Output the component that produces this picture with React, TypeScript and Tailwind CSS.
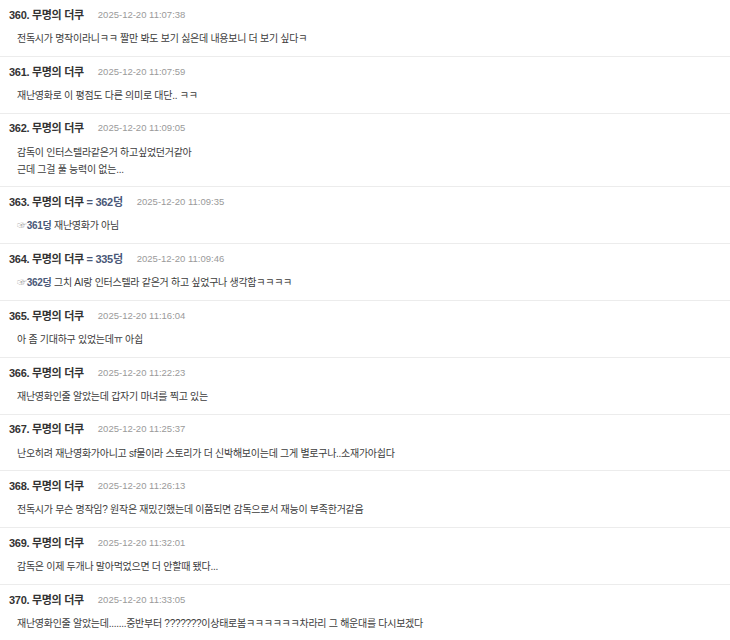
type Reply = { no: number; time: string; ref?: number; lines: React.ReactNode[] };

const Hand = ({ n }: { n: number }) => (
  <>
    <span className="text-[#aaa] text-[10px]">☞</span>
    <span className="font-bold text-[#4a5878]">{n}덩</span>
  </>
);

const replies: Reply[] = [
  { no: 360, time: '2025-12-20 11:07:38', lines: ['전독시가 명작이라니ㅋㅋ 짤만 봐도 보기 싫은데 내용보니 더 보기 싶다ㅋ'] },
  { no: 361, time: '2025-12-20 11:07:59', lines: ['재난영화로 이 평점도 다른 의미로 대단.. ㅋㅋ'] },
  { no: 362, time: '2025-12-20 11:09:05', lines: ['감독이 인터스텔라같은거 하고싶었던거같아', '근데 그걸 풀 능력이 없는...'] },
  { no: 363, time: '2025-12-20 11:09:35', ref: 362, lines: [<><Hand n={361} /> 재난영화가 아님</>] },
  { no: 364, time: '2025-12-20 11:09:46', ref: 335, lines: [<><Hand n={362} /> 그치 AI랑 인터스텔라 같은거 하고 싶었구나 생각함ㅋㅋㅋㅋ</>] },
  { no: 365, time: '2025-12-20 11:16:04', lines: ['아 좀 기대하구 있었는데ㅠ 아쉽'] },
  { no: 366, time: '2025-12-20 11:22:23', lines: ['재난영화인줄 알았는데 갑자기 마녀를 찍고 있는'] },
  { no: 367, time: '2025-12-20 11:25:37', lines: ['난오히려 재난영화가아니고 sf물이라 스토리가 더 신박해보이는데 그게 별로구나..소재가아쉽다'] },
  { no: 368, time: '2025-12-20 11:26:13', lines: ['전독시가 무슨 명작임? 원작은 재밌긴했는데 이쯤되면 감독으로서 재능이 부족한거같음'] },
  { no: 369, time: '2025-12-20 11:32:01', lines: ['감독은 이제 두개나 말아먹었으면 더 안할때 됐다...'] },
  { no: 370, time: '2025-12-20 11:33:05', lines: ['재난영화인줄 알았는데.......중반부터 ???????이상태로봄ㅋㅋㅋㅋㅋㅋ차라리 그 해운대를 다시보겠다'] },
];

export default function App() {
  return (
    <div
      className="w-[730px] h-[640px] overflow-hidden bg-white"
      style={{ fontFamily: '"Liberation Sans", "Noto Sans CJK KR", sans-serif' }}
    >
      {replies.map((r) => (
        <div key={r.no} className="border-b border-[#ececec] pl-[9px] pt-[6px] pb-[8.8px]">
          <div className="flex items-center h-[18px] whitespace-nowrap">
            <span className="text-[11px] font-bold tracking-[-0.3px] text-[#333]">
              {r.no}. 무명의 더쿠
              {r.ref && <span className="text-[#4a5878]"> = {r.ref}덩</span>}
            </span>
            <span className="ml-[14px] text-[9.5px] text-[#9a9a9a]">{r.time}</span>
          </div>
          <div className="mt-[6px] pl-[8px] text-[10px] tracking-[-0.28px] text-[#3c3c3c]">
            {r.lines.map((l, i) => (
              <div key={i} className="h-[17px] leading-[17px] whitespace-nowrap">{l}</div>
            ))}
          </div>
        </div>
      ))}
    </div>
  );
}
